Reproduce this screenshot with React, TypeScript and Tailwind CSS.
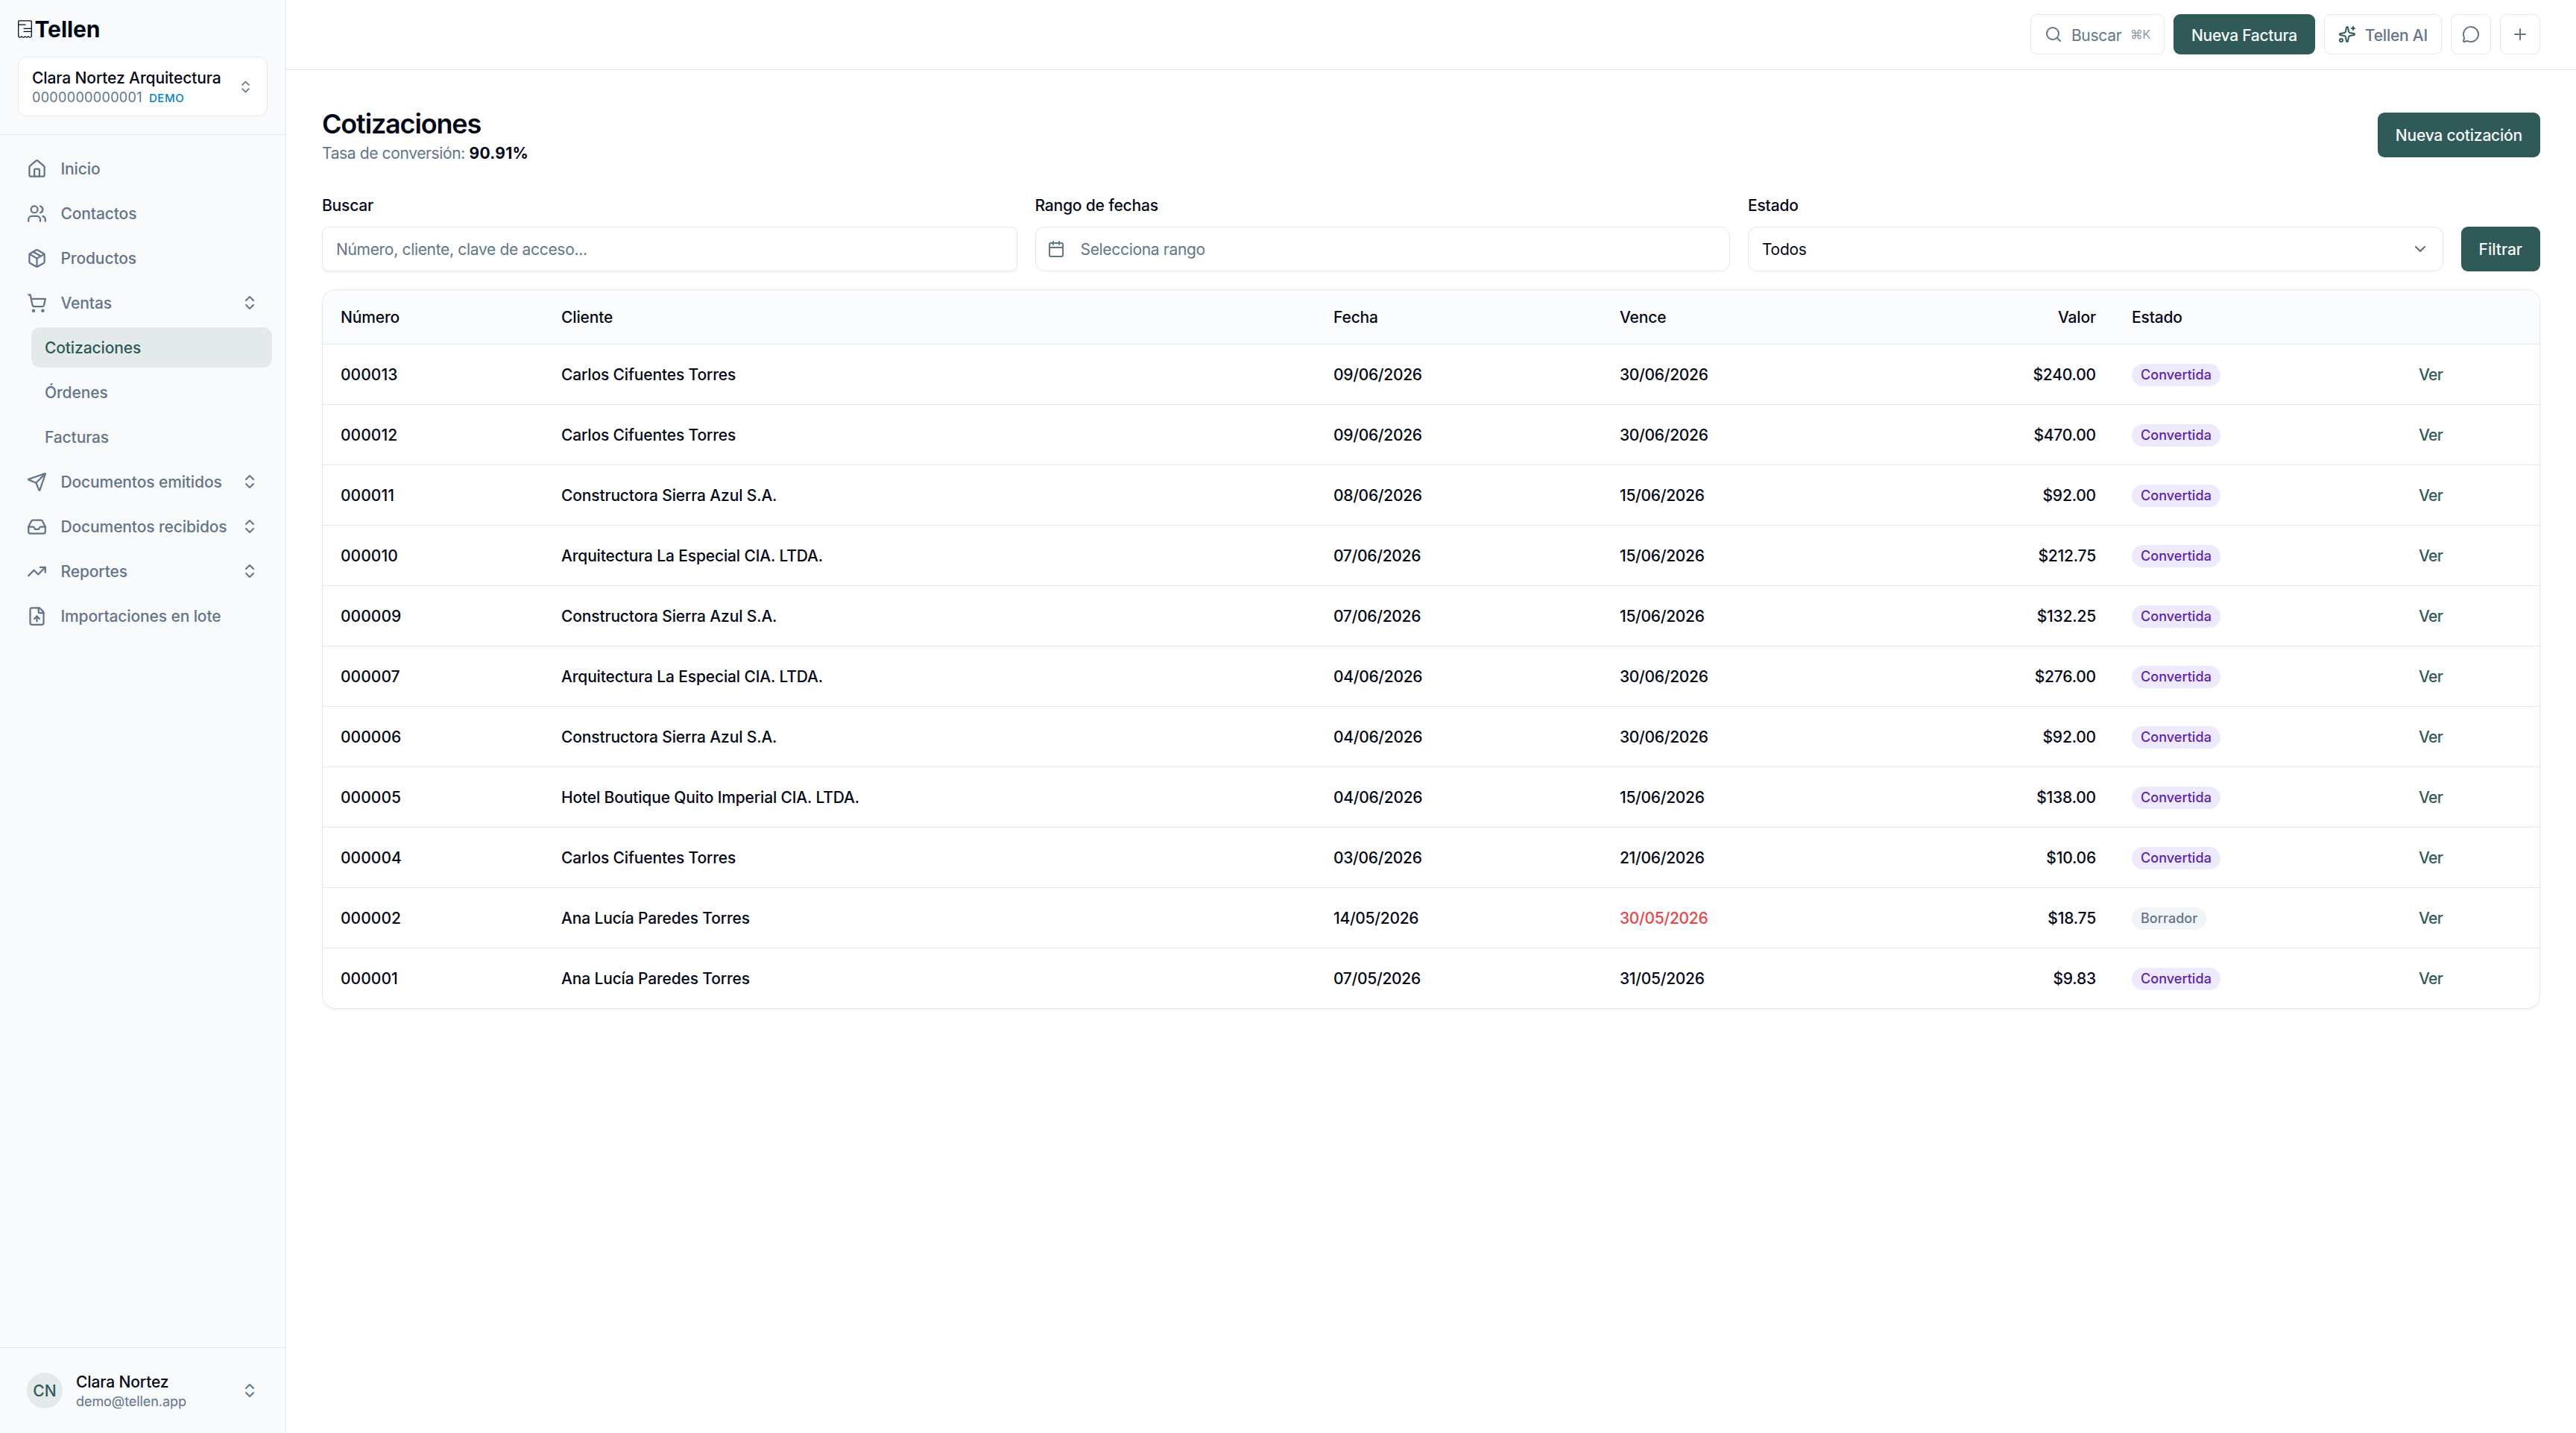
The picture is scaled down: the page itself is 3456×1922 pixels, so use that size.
import React from "react";
import {
  Calendar,
  ChevronDown,
  ChevronsUpDown,
  FileUp,
  House,
  Inbox,
  MessageCircle,
  Package,
  Plus,
  Search,
  Send,
  ShoppingCart,
  Sparkles,
  TrendingUp,
  Users,
  type LucideIcon,
} from "lucide-react";

type QuoteStatus = "Convertida" | "Borrador";

interface Quote {
  number: string;
  client: string;
  date: string;
  due: string;
  overdue?: boolean;
  amount: string;
  status: QuoteStatus;
}

interface NavItem {
  label: string;
  icon: LucideIcon;
  expandable?: boolean;
  children?: { label: string; active?: boolean }[];
}

const navItems: NavItem[] = [
  { label: "Inicio", icon: House },
  { label: "Contactos", icon: Users },
  { label: "Productos", icon: Package },
  {
    label: "Ventas",
    icon: ShoppingCart,
    expandable: true,
    children: [
      { label: "Cotizaciones", active: true },
      { label: "Órdenes" },
      { label: "Facturas" },
    ],
  },
  { label: "Documentos emitidos", icon: Send, expandable: true },
  { label: "Documentos recibidos", icon: Inbox, expandable: true },
  { label: "Reportes", icon: TrendingUp, expandable: true },
  { label: "Importaciones en lote", icon: FileUp },
];

const quotes: Quote[] = [
  { number: "000013", client: "Carlos Cifuentes Torres", date: "09/06/2026", due: "30/06/2026", amount: "$240.00", status: "Convertida" },
  { number: "000012", client: "Carlos Cifuentes Torres", date: "09/06/2026", due: "30/06/2026", amount: "$470.00", status: "Convertida" },
  { number: "000011", client: "Constructora Sierra Azul S.A.", date: "08/06/2026", due: "15/06/2026", amount: "$92.00", status: "Convertida" },
  { number: "000010", client: "Arquitectura La Especial CIA. LTDA.", date: "07/06/2026", due: "15/06/2026", amount: "$212.75", status: "Convertida" },
  { number: "000009", client: "Constructora Sierra Azul S.A.", date: "07/06/2026", due: "15/06/2026", amount: "$132.25", status: "Convertida" },
  { number: "000007", client: "Arquitectura La Especial CIA. LTDA.", date: "04/06/2026", due: "30/06/2026", amount: "$276.00", status: "Convertida" },
  { number: "000006", client: "Constructora Sierra Azul S.A.", date: "04/06/2026", due: "30/06/2026", amount: "$92.00", status: "Convertida" },
  { number: "000005", client: "Hotel Boutique Quito Imperial CIA. LTDA.", date: "04/06/2026", due: "15/06/2026", amount: "$138.00", status: "Convertida" },
  { number: "000004", client: "Carlos Cifuentes Torres", date: "03/06/2026", due: "21/06/2026", amount: "$10.06", status: "Convertida" },
  { number: "000002", client: "Ana Lucía Paredes Torres", date: "14/05/2026", due: "30/05/2026", overdue: true, amount: "$18.75", status: "Borrador" },
  { number: "000001", client: "Ana Lucía Paredes Torres", date: "07/05/2026", due: "31/05/2026", amount: "$9.83", status: "Convertida" },
];

function LogoMark() {
  return (
    <svg
      className="h-4 w-[12.67px]"
      viewBox="0 0 19 24"
      fill="none"
      stroke="currentColor"
      strokeWidth={1.25}
      strokeLinejoin="round"
    >
      <path d="M.7 21.8V2Q.7.9 1.8.9H17.2Q18.3.9 18.3 2V21.8Q16.1 24.3 13.9 21.8Q11.7 24.3 9.5 21.8Q7.3 24.3 5.1 21.8Q2.9 24.3.7 21.8Z" />
      <path d="M1 6h9.5M7.6 11.3h10.5M7.6 15.3h10.5" />
    </svg>
  );
}

function Sidebar() {
  return (
    <aside className="flex w-64 shrink-0 flex-col border-r border-[#e2e8f0] bg-[#f8fafc]">
      <div className="border-b border-[#e2e8f0] px-4 pt-3 pb-4">
        <div className="flex items-center gap-[2.33px]">
          <LogoMark />
          <span className="text-xl font-bold tracking-[-0.05px]">Tellen</span>
        </div>
        <button className="mt-[10.67px] flex w-full items-center justify-between rounded-lg border border-[#e2e8f0] bg-white px-3 py-2 text-left">
          <div>
            <div className="pt-[0.67px] text-sm font-medium tracking-[-0.07px]">Clara Nortez Arquitectura</div>
            <div className="-mt-[0.67px] flex items-center gap-1.5 text-xs text-[#64748b]">
              <span className="tracking-[0.22px]">0000000000001</span>
              <span className="pt-px text-[10px] font-medium tracking-[0.4px] text-[#0284c7]">DEMO</span>
            </div>
          </div>
          <ChevronsUpDown className="size-3.5 text-[#64748b]" />
        </button>
      </div>

      <nav className="flex flex-1 flex-col gap-1 p-3 text-sm font-medium tracking-[-0.08px] text-[#64748b]">
        {navItems.map((item) => (
          <React.Fragment key={item.label}>
            <a className="flex h-9 items-center gap-3 rounded-lg px-3">
              <item.icon className="size-[18px]" />
              <span className="flex-1 pt-[1.33px] pl-[0.33px] whitespace-nowrap">{item.label}</span>
              {item.expandable && <ChevronsUpDown className="size-4" />}
            </a>
            {item.children?.map((child) => (
              <a
                key={child.label}
                className={`ml-4 flex h-9 items-center rounded-lg px-3 pt-[1.33px] ${
                  child.active ? "bg-[#e4eae9] text-[#2f5a58]" : ""
                }`}
              >
                {child.label}
              </a>
            ))}
          </React.Fragment>
        ))}
      </nav>

      <div className="border-t border-[#e2e8f0] p-3">
        <div className="flex items-center gap-3 px-3 py-2">
          <div className="flex size-8 items-center justify-center rounded-full bg-[#e4eae9] pt-[1.33px] text-sm font-medium text-[#2f5a58]">
            CN
          </div>
          <div className="flex-1">
            <div className="pt-[0.67px] text-sm font-medium tracking-[-0.08px]">Clara Nortez</div>
            <div className="-mt-[0.67px] text-xs tracking-[-0.04px] text-[#64748b]">demo@tellen.app</div>
          </div>
          <ChevronsUpDown className="size-4 text-[#64748b]" />
        </div>
      </div>
    </aside>
  );
}

function TopBar() {
  return (
    <header className="flex h-[62.67px] items-center justify-end gap-2 border-b border-[#e2e8f0] px-8 pb-[0.67px] text-sm font-medium tracking-[-0.15px] text-[#64748b]">
      <button className="flex h-9 items-center gap-2 rounded-md border border-[#e2e8f0] px-3">
        <Search className="size-4" />
        <span className="pt-[2px] font-normal tracking-[-0.2px]">Buscar</span>
        <kbd className="pt-px font-[Inter,sans-serif] text-[11px] font-normal tracking-[-0.3px] opacity-75">⌘K</kbd>
      </button>
      <button className="h-9 rounded-md bg-[#2f5a58] px-4 pt-[2px] tracking-[-0.19px] text-[#f8fafc]">
        Nueva Factura
      </button>
      <button className="flex h-9 items-center gap-2 rounded-md border border-[#e2e8f0] px-3">
        <Sparkles className="size-4 text-[#2f5a58]" />
        <span className="pt-[2px]">Tellen AI</span>
      </button>
      <button className="flex size-9 items-center justify-center rounded-md border border-[#e2e8f0]">
        <MessageCircle className="size-4" />
      </button>
      <button className="flex size-9 items-center justify-center rounded-md border border-[#e2e8f0]">
        <Plus className="size-4" />
      </button>
    </header>
  );
}

function Filters() {
  return (
    <div className="mt-[27.33px] flex items-end gap-4 text-sm">
      <div className="flex flex-1 flex-col gap-[8.67px]">
        <label className="font-medium tracking-[-0.12px]">Buscar</label>
        <div className="flex h-10 items-center rounded-md border border-[#e2e8f0] px-3 pt-[1.33px] tracking-[-0.21px] text-[#64748b] shadow-xs">
          Número, cliente, clave de acceso...
        </div>
      </div>
      <div className="flex flex-1 flex-col gap-[8.67px]">
        <label className="font-medium tracking-[-0.12px]">Rango de fechas</label>
        <div className="flex h-10 items-center gap-[14px] rounded-lg border border-[#e2e8f0] pl-[10px] tracking-[-0.21px] text-[#64748b]">
          <Calendar className="size-4" />
          <span className="pt-[1.33px]">Selecciona rango</span>
        </div>
      </div>
      <div className="flex flex-1 flex-col gap-[8.67px]">
        <label className="font-medium tracking-[-0.12px]">Estado</label>
        <div className="flex h-10 items-center justify-between rounded-lg border border-[#e2e8f0] px-3 tracking-[-0.2px]">
          <span className="pt-[1.33px]">Todos</span>
          <ChevronDown className="size-4 opacity-60" />
        </div>
      </div>
      <button className="h-10 rounded-md bg-[#2f5a58] px-4 pt-[1.33px] font-medium text-[#f8fafc]">Filtrar</button>
    </div>
  );
}

function StatusBadge({ status }: { status: QuoteStatus }) {
  return (
    <span
      className={`block w-fit rounded-full px-2 py-0.5 text-xs font-medium tracking-[0.03px] ${
        status === "Convertida" ? "bg-[#ede9fe] text-[#5b21b6]" : "bg-[#f1f5f9] text-[#64748b]"
      }`}
    >
      {status}
    </span>
  );
}

function QuotesTable() {
  return (
    <div className="mt-4 overflow-hidden rounded-xl border border-[#e2e8f0] shadow-xs">
      <table className="w-full table-fixed border-separate border-spacing-0 text-left text-sm font-medium">
        <colgroup>
          <col className="w-[197.33px]" />
          <col className="w-[690.67px]" />
          <col className="w-[256px]" />
          <col className="w-[256.67px]" />
          <col className="w-[201.33px]" />
          <col className="w-[256.67px]" />
          <col />
        </colgroup>
        <thead>
          <tr className="h-[48.67px] bg-[#fbfcfe] *:border-b *:border-[#e2e8f0] *:px-4 *:pt-[1.33px] *:font-medium *:tracking-[-0.1px]">
            <th>Número</th>
            <th>Cliente</th>
            <th>Fecha</th>
            <th>Vence</th>
            <th className="text-right">Valor</th>
            <th>Estado</th>
            <th />
          </tr>
        </thead>
        <tbody>
          {quotes.map((quote) => (
            <tr
              key={quote.number}
              className="h-[54px] *:border-b *:border-[#e2e8f0] *:px-4 *:pt-[1.33px] last:h-[53.33px] last:*:border-b-0"
            >
              <td className="tracking-[0.03px]">{quote.number}</td>
              <td className="tracking-[-0.1px]">{quote.client}</td>
              <td className="tracking-[-0.2px]">{quote.date}</td>
              <td className={`tracking-[-0.2px] ${quote.overdue ? "text-[#ef4444]" : ""}`}>{quote.due}</td>
              <td className="text-right tracking-[-0.13px]">{quote.amount}</td>
              <td>
                <StatusBadge status={quote.status} />
              </td>
              <td className="tracking-[-0.45px] text-[#2f5a58]">Ver</td>
            </tr>
          ))}
        </tbody>
      </table>
    </div>
  );
}

export default function App() {
  return (
    <div className="flex h-[calc(100vh/1.5)] bg-white font-[Inter,'Noto_Sans',sans-serif] text-[#020817] [zoom:1.5]">
      <Sidebar />
      <div className="flex min-w-0 flex-1 flex-col">
        <TopBar />
        <main className="flex-1 px-8 pt-8">
          <div className="flex items-center justify-between">
            <div>
              <h1 className="text-2xl font-semibold tracking-[-0.78px]">Cotizaciones</h1>
              <p className="-mb-[0.67px] pt-[0.67px] text-sm tracking-[-0.25px] text-[#64748b]">
                Tasa de conversión:{" "}
                <span className="font-bold tracking-[0.2px] text-[#020817]">90.91%</span>
              </p>
            </div>
            <button className="h-10 rounded-md bg-[#2f5a58] px-4 pt-[1.33px] text-sm font-medium tracking-[-0.14px] text-[#f8fafc]">
              Nueva cotización
            </button>
          </div>
          <Filters />
          <QuotesTable />
        </main>
      </div>
    </div>
  );
}
